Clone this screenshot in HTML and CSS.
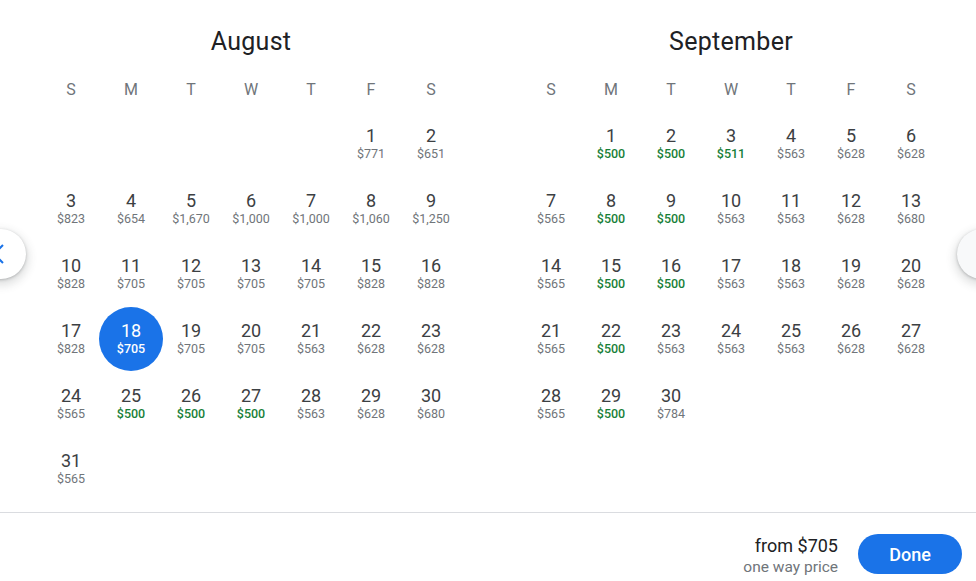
FILE: index.html
```html
<!DOCTYPE html>
<html lang="en">
<head>
<meta charset="utf-8">
<title>Calendar</title>
<link rel="stylesheet" href="styles.css">
</head>
<body>
<div class="page">
  <div class="months">
    <section class="month">
      <h2 class="title">August</h2>
      <div class="weekdays"><span>S</span><span>M</span><span>T</span><span>W</span><span>T</span><span>F</span><span>S</span></div>
      <div class="days">
        <div class="day empty"></div><div class="day empty"></div><div class="day empty"></div><div class="day empty"></div><div class="day empty"></div>
        <div class="day"><span class="n">1</span><span class="p">$771</span></div>
        <div class="day"><span class="n">2</span><span class="p">$651</span></div>
        <div class="day"><span class="n">3</span><span class="p">$823</span></div>
        <div class="day"><span class="n">4</span><span class="p">$654</span></div>
        <div class="day"><span class="n">5</span><span class="p">$1,670</span></div>
        <div class="day"><span class="n">6</span><span class="p">$1,000</span></div>
        <div class="day"><span class="n">7</span><span class="p">$1,000</span></div>
        <div class="day"><span class="n">8</span><span class="p">$1,060</span></div>
        <div class="day"><span class="n">9</span><span class="p">$1,250</span></div>
        <div class="day"><span class="n">10</span><span class="p">$828</span></div>
        <div class="day"><span class="n">11</span><span class="p">$705</span></div>
        <div class="day"><span class="n">12</span><span class="p">$705</span></div>
        <div class="day"><span class="n">13</span><span class="p">$705</span></div>
        <div class="day"><span class="n">14</span><span class="p">$705</span></div>
        <div class="day"><span class="n">15</span><span class="p">$828</span></div>
        <div class="day"><span class="n">16</span><span class="p">$828</span></div>
        <div class="day"><span class="n">17</span><span class="p">$828</span></div>
        <div class="day selected"><span class="n">18</span><span class="p">$705</span></div>
        <div class="day"><span class="n">19</span><span class="p">$705</span></div>
        <div class="day"><span class="n">20</span><span class="p">$705</span></div>
        <div class="day"><span class="n">21</span><span class="p">$563</span></div>
        <div class="day"><span class="n">22</span><span class="p">$628</span></div>
        <div class="day"><span class="n">23</span><span class="p">$628</span></div>
        <div class="day"><span class="n">24</span><span class="p">$565</span></div>
        <div class="day"><span class="n">25</span><span class="p low">$500</span></div>
        <div class="day"><span class="n">26</span><span class="p low">$500</span></div>
        <div class="day"><span class="n">27</span><span class="p low">$500</span></div>
        <div class="day"><span class="n">28</span><span class="p">$563</span></div>
        <div class="day"><span class="n">29</span><span class="p">$628</span></div>
        <div class="day"><span class="n">30</span><span class="p">$680</span></div>
        <div class="day"><span class="n">31</span><span class="p">$565</span></div>
      </div>
    </section>
    <section class="month">
      <h2 class="title">September</h2>
      <div class="weekdays"><span>S</span><span>M</span><span>T</span><span>W</span><span>T</span><span>F</span><span>S</span></div>
      <div class="days">
        <div class="day empty"></div>
        <div class="day"><span class="n">1</span><span class="p low">$500</span></div>
        <div class="day"><span class="n">2</span><span class="p low">$500</span></div>
        <div class="day"><span class="n">3</span><span class="p low">$511</span></div>
        <div class="day"><span class="n">4</span><span class="p">$563</span></div>
        <div class="day"><span class="n">5</span><span class="p">$628</span></div>
        <div class="day"><span class="n">6</span><span class="p">$628</span></div>
        <div class="day"><span class="n">7</span><span class="p">$565</span></div>
        <div class="day"><span class="n">8</span><span class="p low">$500</span></div>
        <div class="day"><span class="n">9</span><span class="p low">$500</span></div>
        <div class="day"><span class="n">10</span><span class="p">$563</span></div>
        <div class="day"><span class="n">11</span><span class="p">$563</span></div>
        <div class="day"><span class="n">12</span><span class="p">$628</span></div>
        <div class="day"><span class="n">13</span><span class="p">$680</span></div>
        <div class="day"><span class="n">14</span><span class="p">$565</span></div>
        <div class="day"><span class="n">15</span><span class="p low">$500</span></div>
        <div class="day"><span class="n">16</span><span class="p low">$500</span></div>
        <div class="day"><span class="n">17</span><span class="p">$563</span></div>
        <div class="day"><span class="n">18</span><span class="p">$563</span></div>
        <div class="day"><span class="n">19</span><span class="p">$628</span></div>
        <div class="day"><span class="n">20</span><span class="p">$628</span></div>
        <div class="day"><span class="n">21</span><span class="p">$565</span></div>
        <div class="day"><span class="n">22</span><span class="p low">$500</span></div>
        <div class="day"><span class="n">23</span><span class="p">$563</span></div>
        <div class="day"><span class="n">24</span><span class="p">$563</span></div>
        <div class="day"><span class="n">25</span><span class="p">$563</span></div>
        <div class="day"><span class="n">26</span><span class="p">$628</span></div>
        <div class="day"><span class="n">27</span><span class="p">$628</span></div>
        <div class="day"><span class="n">28</span><span class="p">$565</span></div>
        <div class="day"><span class="n">29</span><span class="p low">$500</span></div>
        <div class="day"><span class="n">30</span><span class="p">$784</span></div>
      </div>
    </section>
  </div>

  <button class="nav nav-prev" aria-label="Previous">
    <svg width="20" height="20" viewBox="0 0 20 20"><polyline points="13,1 4,10 13,19" fill="none" stroke="#1a73e8" stroke-width="2"/></svg>
  </button>
  <button class="nav nav-next" aria-label="Next"></button>

  <footer class="footer">
    <div class="summary">
      <div class="from">from $705</div>
      <div class="sub">one way price</div>
    </div>
    <button class="done">Done</button>
  </footer>
</div>
</body>
</html>
```

FILE: styles.css
```css
* { box-sizing: border-box; }
html, body {
  margin: 0;
  padding: 0;
  background: #fff;
}
body {
  width: 976px;
  height: 581px;
  overflow: hidden;
  font-family: Roboto, "Noto Sans", Arial, sans-serif;
  color: #3c4043;
}
.page {
  position: relative;
  width: 976px;
  height: 581px;
}
.months {
  display: flex;
  gap: 60px;
  padding-left: 41px;
}
.month {
  width: 420px;
}
.title {
  margin: 26px 0 0;
  height: 32px;
  line-height: 32px;
  font-size: 25px;
  font-weight: 400;
  text-align: center;
  color: #202124;
  letter-spacing: 0.3px;
}
.weekdays {
  display: grid;
  grid-template-columns: repeat(7, 60px);
  margin-top: 22px;
  height: 20px;
  line-height: 20px;
  font-size: 16px;
  color: #70757a;
  text-align: center;
}
.days {
  display: grid;
  grid-template-columns: repeat(7, 60px);
  grid-auto-rows: 65px;
  margin-top: 12px;
}
.day {
  position: relative;
  display: flex;
  flex-direction: column;
  align-items: center;
  justify-content: center;
  padding-bottom: 1px;
}
.n {
  font-size: 18px;
  line-height: 20px;
  color: #3c4043;
}
.p {
  font-size: 12.5px;
  line-height: 16px;
  color: #70757a;
}
.p.low {
  color: #188038;
  font-weight: 500;
}
.day.selected::before {
  content: "";
  position: absolute;
  left: -2px;
  top: 0;
  width: 64px;
  height: 64px;
  border-radius: 50%;
  background: #1a73e8;
}
.day.selected .n,
.day.selected .p {
  position: relative;
  color: #fff;
}
.day.selected .p {
  font-weight: 500;
}
.nav {
  position: absolute;
  top: 229px;
  width: 50px;
  height: 50px;
  border-radius: 50%;
  border: none;
  padding: 0;
  box-shadow: 0 1px 3px rgba(60, 64, 67, 0.3), 0 4px 8px 3px rgba(60, 64, 67, 0.15);
  display: flex;
  align-items: center;
  justify-content: center;
}
.nav-prev {
  left: -24px;
  background: #fff;
}
.nav-prev svg {
  margin-left: -2px;
}
.nav-next {
  left: 957px;
  background: #f8f9fa;
}
.footer {
  position: absolute;
  left: 0;
  right: 0;
  top: 512px;
  height: 69px;
  border-top: 1px solid #dadce0;
  display: flex;
  justify-content: flex-end;
  align-items: flex-start;
  gap: 20px;
  padding-top: 21px;
  padding-right: 14px;
}
.summary {
  text-align: right;
}
.from {
  font-size: 18px;
  line-height: 24px;
  color: #202124;
}
.sub {
  font-size: 15.5px;
  line-height: 18px;
  color: #70757a;
}
.done {
  width: 104px;
  height: 40px;
  border: none;
  border-radius: 20px;
  background: #1a73e8;
  color: #fff;
  font-family: Roboto, Arial, sans-serif;
  font-size: 18px;
  font-weight: 500;
  padding: 0;
}
```
